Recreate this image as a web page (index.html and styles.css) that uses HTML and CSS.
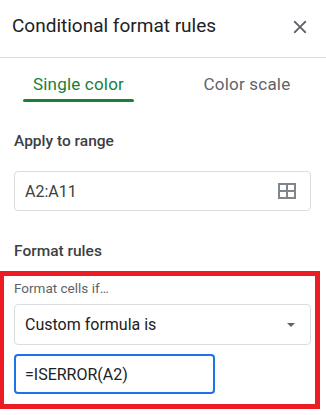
FILE: index.html
```html
<!DOCTYPE html>
<html>
<head>
  <meta charset="UTF-8">
  <title>Conditional format rules</title>
  <link rel="stylesheet" href="styles.css">
</head>
<body>
  <div class="panel">
    <header class="panel-header">
      <h1 class="panel-title">Conditional format rules</h1>
      <button class="close-btn" aria-label="Close">
        <svg width="22" height="22" viewBox="0 0 24 24"><path d="M19 6.41L17.59 5 12 10.59 6.41 5 5 6.41 10.59 12 5 17.59 6.41 19 12 13.41 17.59 19 19 17.59 13.41 12z" fill="#5f6368"/></svg>
      </button>
    </header>

    <nav class="tabs">
      <div class="tab active">Single color</div>
      <div class="tab">Color scale</div>
    </nav>

    <div class="content">
      <div class="label">Apply to range</div>
      <div class="field range-field">
        <span class="field-text">A2:A11</span>
        <svg class="grid-icon" width="18" height="16" viewBox="0 0 18 16">
          <path d="M0 0h18v16H0z" fill="#80868b"/>
          <path d="M2 2h6v5H2zM10 2h6v5h-6zM2 9h6v5H2zM10 9h6v5h-6z" fill="#fff"/>
        </svg>
      </div>

      <div class="label rules-label">Format rules</div>

      <section class="cond">
        <div class="sub-label">Format cells if…</div>
        <div class="field select-field">
          <span class="field-text dark">Custom formula is</span>
          <span class="caret"></span>
        </div>
        <div class="field formula-field">
          <span class="field-text dark">=ISERROR(A2)</span>
        </div>
        <div class="highlight"></div>
      </section>
    </div>
  </div>
</body>
</html>
```

FILE: styles.css
```css
body {
  margin: 0;
  background: #fff;
  font-family: Roboto, "Liberation Sans", Arial, sans-serif;
  color: #202124;
}

.panel {
  width: 326px;
  height: 415px;
  overflow: hidden;
}

.panel-header {
  display: flex;
  align-items: flex-start;
  justify-content: space-between;
  height: 58px;
  box-sizing: border-box;
  padding: 13px 15px 0 12px;
  border-bottom: 1px solid #dadce0;
}

.panel-title {
  margin: 0;
  font-size: 19px;
  line-height: 25px;
  font-weight: 400;
  color: #202124;
}

.close-btn {
  border: 0;
  padding: 0;
  margin-top: 3px;
  background: none;
  width: 22px;
  height: 22px;
}

.close-btn svg {
  display: block;
}

.tabs {
  display: grid;
  grid-template-columns: 111px 106px;
  column-gap: 60px;
  padding-left: 23px;
}

.tab {
  position: relative;
  text-align: center;
  font-size: 17px;
  line-height: 20px;
  letter-spacing: 0.2px;
  color: #5f6368;
  padding: 16px 0 8px;
}

.tab.active {
  color: #188038;
}

.tab.active::after {
  content: "";
  position: absolute;
  left: 0;
  right: 0;
  bottom: 0;
  height: 3px;
  border-radius: 3px 3px 2px 2px;
  background: #188038;
}

.content {
  padding: 0 15px 0 14px;
}

.label {
  margin-top: 29px;
  font-size: 15.5px;
  line-height: 20px;
  font-weight: 500;
  color: #3c4043;
}

.rules-label {
  margin-top: 30px;
}

.field {
  display: flex;
  align-items: center;
  justify-content: space-between;
  box-sizing: border-box;
  height: 40px;
  border: 1px solid #dadce0;
  border-radius: 4px;
  padding: 0 14px 0 10px;
}

.range-field {
  margin-top: 20px;
}

.field-text {
  font-size: 16px;
  color: #3c4043;
}

.field-text.dark {
  color: #202124;
}

.grid-icon {
  display: block;
}

.cond {
  position: relative;
  margin-top: 10px;
  padding-top: 9px;
}

.sub-label {
  font-size: 13.5px;
  line-height: 16px;
  color: #5f6368;
}

.select-field {
  margin-top: 8px;
  height: 41px;
  padding-right: 15px;
}

.caret {
  width: 0;
  height: 0;
  border-left: 4px solid transparent;
  border-right: 4px solid transparent;
  border-top: 4px solid #5f6368;
}

.formula-field {
  margin-top: 9px;
  width: 201px;
  border: 2px solid #1a73e8;
  padding-left: 9px;
}

.highlight {
  position: absolute;
  left: -14px;
  right: -9px;
  top: 0;
  bottom: -15px;
  border: 5px solid #ed1c24;
  border-left-width: 4px;
  pointer-events: none;
}
```
